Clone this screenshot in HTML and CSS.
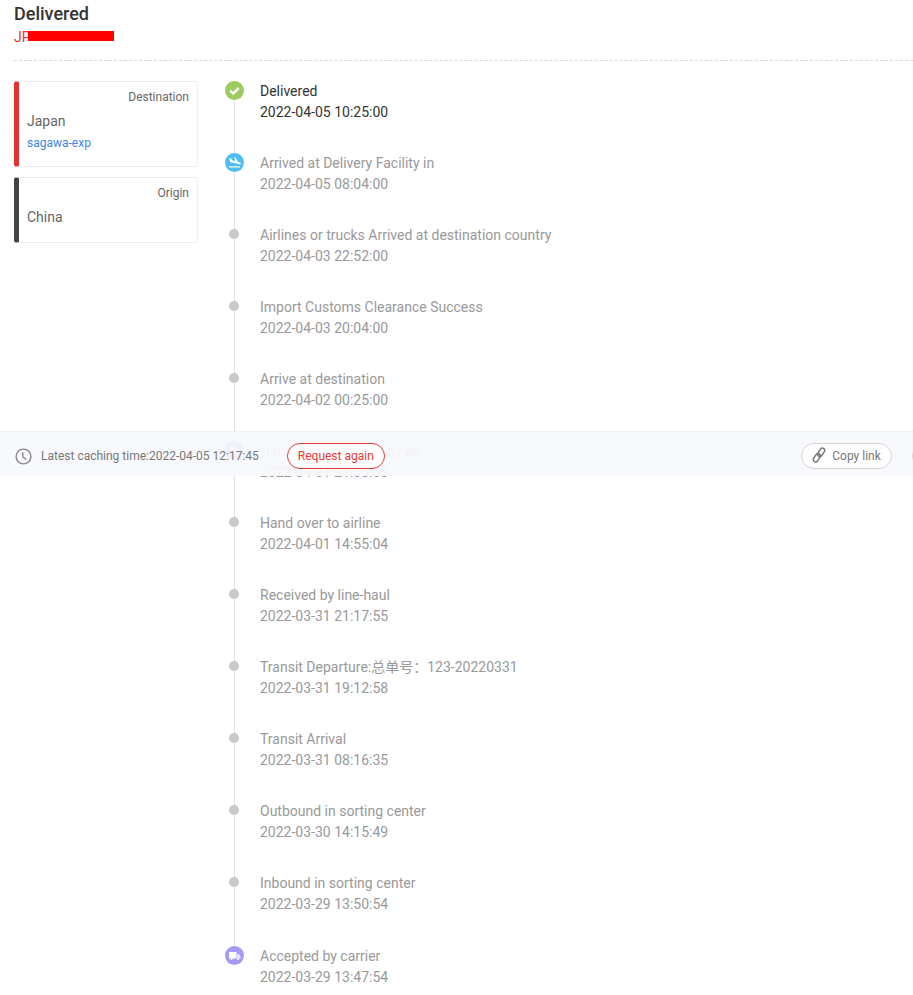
FILE: index.html
```html
<!DOCTYPE html>
<html lang="en">
<head>
<meta charset="utf-8">
<title>Delivered</title>
<link rel="stylesheet" href="styles.css">
</head>
<body>
<div class="page">
  <header class="head">
    <h1 class="status">Delivered</h1>
    <div class="tracking"><span>JP</span><span class="redact"></span></div>
  </header>
  <main class="main">
    <aside class="cards">
      <section class="card card-dest">
        <div class="card-label">Destination</div>
        <div class="card-country">Japan</div>
        <a class="card-link">sagawa-exp</a>
      </section>
      <section class="card card-origin">
        <div class="card-label">Origin</div>
        <div class="card-country">China</div>
      </section>
    </aside>
    <ol class="timeline">
      <li class="row row-current">
        <div class="marker marker-first"><span class="badge badge-green"><svg viewBox="0 0 19 19" width="19" height="19"><path d="M5.200 9.700l3 2.900 5.600-5.600" fill="none" stroke="#fff" stroke-width="2.500"/></svg></span></div>
        <div class="text"><div>Delivered</div><div>2022-04-05 10:25:00</div></div>
      </li>
      <li class="row">
        <div class="marker"><span class="badge badge-sky"><svg viewBox="0 0 19 19" width="19" height="19"><path d="M4 13.300h11v1.300H4zM4.200 5.200l1.200-.3 2.300 2.500 2.800.7L9 4l1.500.4 2.600 4.600 2 .6c.6.2.9.7.8 1.200-.1.400-.6.600-1.100.500L5.600 9.300 4.700 8z" fill="#fff"/></svg></span></div>
        <div class="text"><div>Arrived at Delivery Facility in</div><div>2022-04-05 08:04:00</div></div>
      </li>
      <li class="row">
        <div class="marker"><span class="dot"></span></div>
        <div class="text"><div>Airlines or trucks Arrived at destination country</div><div>2022-04-03 22:52:00</div></div>
      </li>
      <li class="row">
        <div class="marker"><span class="dot"></span></div>
        <div class="text"><div>Import Customs Clearance Success</div><div>2022-04-03 20:04:00</div></div>
      </li>
      <li class="row">
        <div class="marker"><span class="dot"></span></div>
        <div class="text"><div>Arrive at destination</div><div>2022-04-02 00:25:00</div></div>
      </li>
      <li class="row">
        <div class="marker"><span class="badge badge-blue"><svg viewBox="0 0 19 19" width="19" height="19"><path d="M4.500 5l11 4.500-11 4.500 1.500-4.500z" fill="#fff"/></svg></span></div>
        <div class="text"><div>Hangzhou , Shipped by air</div><div>2022-04-01 21:33:00</div></div>
      </li>
      <li class="row">
        <div class="marker"><span class="dot"></span></div>
        <div class="text"><div>Hand over to airline</div><div>2022-04-01 14:55:04</div></div>
      </li>
      <li class="row">
        <div class="marker"><span class="dot"></span></div>
        <div class="text"><div>Received by line-haul</div><div>2022-03-31 21:17:55</div></div>
      </li>
      <li class="row">
        <div class="marker"><span class="dot"></span></div>
        <div class="text"><div>Transit Departure:总单号：123-20220331</div><div>2022-03-31 19:12:58</div></div>
      </li>
      <li class="row">
        <div class="marker"><span class="dot"></span></div>
        <div class="text"><div>Transit Arrival</div><div>2022-03-31 08:16:35</div></div>
      </li>
      <li class="row">
        <div class="marker"><span class="dot"></span></div>
        <div class="text"><div>Outbound in sorting center</div><div>2022-03-30 14:15:49</div></div>
      </li>
      <li class="row row-penult">
        <div class="marker"><span class="dot"></span></div>
        <div class="text"><div>Inbound in sorting center</div><div>2022-03-29 13:50:54</div></div>
      </li>
      <li class="row row-last">
        <div class="marker marker-last"><span class="badge badge-purple"><svg viewBox="0 0 19 19" width="19" height="19"><path d="M4 6h7.500v6.500H4z" fill="#fff"/><path d="M12 8h1.800l1.700 2v2.500H12z" fill="#fff" fill-opacity=".7"/><circle cx="6.500" cy="13" r="1" fill="#fff"/><circle cx="13" cy="13" r="1" fill="#fff"/></svg></span></div>
        <div class="text"><div>Accepted by carrier</div><div>2022-03-29 13:47:54</div></div>
      </li>
    </ol>
  </main>
</div>
<div class="cachebar">
  <svg class="clock" viewBox="0 0 17 17" width="17" height="17"><circle cx="8.500" cy="8.500" r="7.400" fill="none" stroke="#888" stroke-width="1.400"/><path d="M7.800 4.200v4.600l3.400 2.700" fill="none" stroke="#888" stroke-width="1.400"/></svg>
  <span class="cache-text">Latest caching time:2022-04-05 12:17:45</span>
  <button class="btn btn-red">Request again</button>
  <span class="spacer"></span>
  <button class="btn btn-copy"><svg class="link-icon" viewBox="0 0 14 18" width="14" height="18"><g fill="none" stroke="#777" stroke-width="1.500"><rect x="0.300" y="9.400" width="9" height="4.600" rx="2.300" transform="rotate(-58 4.800 11.700)"/><rect x="4.700" y="4" width="9" height="4.600" rx="2.300" transform="rotate(-58 9.200 6.300)"/></g></svg>Copy link</button>
  <button class="btn btn-next"></button>
</div>
</body>
</html>
```
FILE: styles.css
```css
html, body { margin: 0; padding: 0; height: 995px; overflow: hidden; background: #fff; }
body { font-family: Roboto, "Noto Sans CJK SC", sans-serif; font-size: 14px; color: #9b9b9b; position: relative; }
.page { padding: 0 0 0 14px; }
.head { height: 60px; box-sizing: content-box; border-bottom: 1px dashed #d8d8d8; }
.status { margin: 0; padding-top: 3px; font-size: 18px; font-weight: 500; line-height: 21px; color: #333; }
.tracking { position: relative; margin-top: 2px; font-size: 14px; line-height: 22px; color: #e53935; }
.redact { position: absolute; left: 14px; top: 5px; width: 86px; height: 10px; background: #f00; }
.main { display: flex; padding-top: 17px; }
.cards { width: 184px; margin-right: 26px; padding-top: 3px; display: flex; flex-direction: column; gap: 10px; flex: none; }
.card { box-sizing: border-box; border: 1px solid #eee; border-radius: 3px; padding: 7px 8px 0 8px; font-size: 12px; color: #666; position: relative; }
.card-dest { height: 86px; border-left: 5px solid #e53333; }
.card-origin { height: 66px; border-left: 5px solid #444; }
.card-label { text-align: right; line-height: 16px; }
.card-country { margin-top: 6px; font-size: 14px; line-height: 20px; color: #666; }
.card-link { display: block; margin-top: 2px; line-height: 20px; color: #3d85e8; }
.timeline { list-style: none; margin: 2px 0 0; padding: 0; flex: 1; }
.row { display: flex; height: 72px; gap: 16px; }
.marker { width: 19px; flex: none; display: flex; flex-direction: column; align-items: center; background: linear-gradient(#e0e0e0, #e0e0e0) center / 1px 100% no-repeat; margin-left: 1px; }
.marker-first { margin-top: 1px; }
.marker-last { background: none; }
.row-penult { height: 73px; }
.badge { width: 19px; height: 19px; border-radius: 50%; display: block; margin-top: 1px; }
.badge svg { display: block; }
.marker-first .badge { margin-top: 0; }
.badge-green { background: #9ccb5f; }
.badge-sky { background: #4dbcf2; }
.badge-blue { background: #5b8ff0; }
.badge-purple { background: #a49af5; }
.dot { width: 10px; height: 10px; border-radius: 50%; background: #c9c9c9; margin: 5px 1px 0 0; }
.text { padding-top: 1px; line-height: 21px; color: #999; }
.row-current .text { color: #333; }
.cachebar { box-sizing: border-box; position: absolute; left: 0; right: 0; top: 431px; height: 45px; border-top: 1px solid #eef0f3; background: rgba(248, 249, 252, 0.93); display: flex; align-items: center; padding: 4px 0 0 15px; font-size: 12px; color: #777; overflow: hidden; }
.clock { flex: none; margin-right: 9px; }
.cache-text { white-space: nowrap; }
.btn { box-sizing: border-box; height: 26px; border-radius: 13px; font: inherit; background: #fff; padding: 0; display: flex; align-items: center; justify-content: center; flex: none; }
.btn-red { margin-left: 28px; width: 98px; border: 1px solid #e53935; color: #e53935; }
.spacer { flex: 1; }
.btn-copy { width: 91px; gap: 6px; border: 1px solid #d4d4d4; color: #777; margin-top: -1px; }
.link-icon { flex: none; margin-bottom: 2px; }
.btn-next { width: 91px; margin-left: 20px; margin-right: -90px; border: 1px solid #d4d4d4; }
```
